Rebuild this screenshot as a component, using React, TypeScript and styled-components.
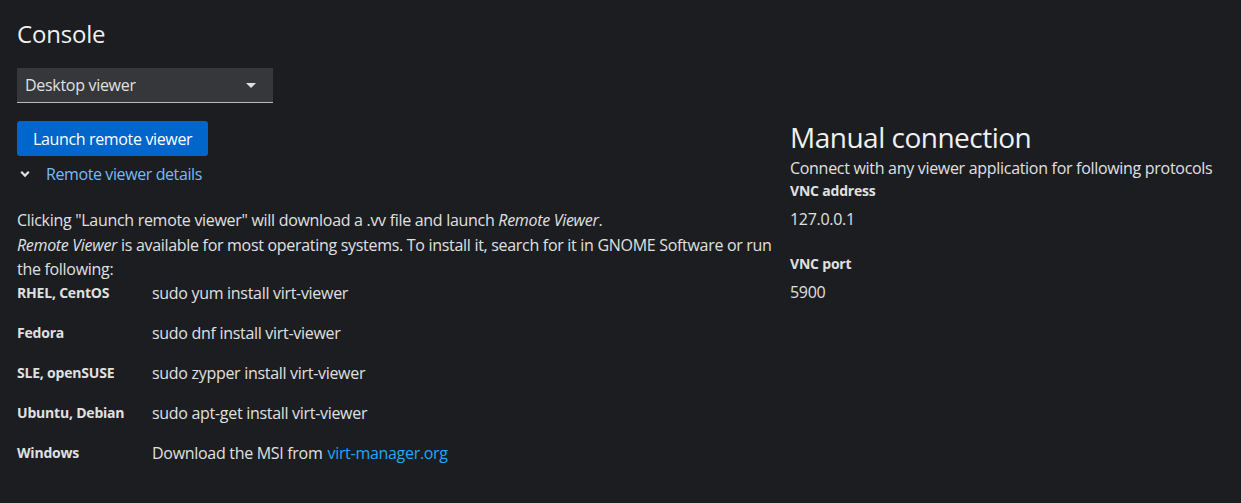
import React from "react";
import styled, { createGlobalStyle } from "styled-components";

const Global = createGlobalStyle`
  html, body { margin: 0; padding: 0; background: #1b1d21; }
  body { font-family: "Open Sans", "Noto Sans", sans-serif; color: #e0e0e0; letter-spacing: -0.3px; }
  * { box-sizing: border-box; }
`;

const Page = styled.div`
  min-height: 503px;
  background: #1b1d21;
  padding: 18px 8px 18px 17px;
`;

const Title = styled.h1`
  margin: 0;
  font-size: 24px;
  font-weight: 400;
  line-height: 32px;
  color: #f0f0f0;
  letter-spacing: -0.2px;
`;

const Columns = styled.div`
  display: grid;
  grid-template-columns: 757px 1fr;
  column-gap: 16px;
  margin-top: 18px;
`;

const Left = styled.div`
  display: flex;
  flex-direction: column;
  align-items: flex-start;
`;

const Select = styled.div`
  width: 256px;
  height: 35px;
  background: #36373a;
  border-bottom: 1px solid #b8bbbe;
  display: flex;
  align-items: center;
  justify-content: space-between;
  padding: 0 17px 0 8px;
  font-size: 16px;
  color: #e0e0e0;
`;

const Caret = styled.span`
  width: 0;
  height: 0;
  border-left: 5px solid transparent;
  border-right: 5px solid transparent;
  border-top: 5px solid #e0e0e0;
`;

const PrimaryButton = styled.button`
  margin-top: 18px;
  height: 35px;
  padding: 0 16px;
  border: none;
  border-radius: 3px;
  background: #0066cc;
  color: #ffffff;
  font-family: inherit;
  font-size: 16px;
  letter-spacing: -0.35px;
`;

const Toggle = styled.div`
  margin-top: 7px;
  display: flex;
  align-items: center;
  gap: 16px;
  padding-left: 3px;
  font-size: 16px;
  color: #73bcf7;
  height: 22px;
  letter-spacing: -0.4px;
`;

const Paragraph = styled.p`
  margin: 23px 0 0;
  font-size: 16px;
  line-height: 24.5px;
  color: #e0e0e0;
`;

const OsTable = styled.div`
  display: grid;
  grid-template-columns: 135px 1fr;
  grid-auto-rows: 40px;
  margin-top: -1px;
`;

const OsName = styled.div`
  font-size: 14px;
  font-weight: 700;
  display: flex;
  align-items: center;
  height: 24px;
  color: #e0e0e0;
  letter-spacing: -0.2px;
`;

const OsCmd = styled.div`
  font-size: 16px;
  display: flex;
  align-items: center;
  height: 24px;
  color: #e0e0e0;
`;

const Link = styled.a`
  color: #1fa7f8;
  text-decoration: none;
  margin-left: 5px;
`;

const Right = styled.div`
  padding-top: 51px;
`;

const SubTitle = styled.h2`
  margin: 0;
  font-size: 28px;
  font-weight: 400;
  line-height: 36px;
  color: #f0f0f0;
  letter-spacing: -0.5px;
`;

const Desc = styled.div`
  font-size: 16px;
  line-height: 24px;
  margin-top: 1px;
  white-space: nowrap;
`;

const Term = styled.div<{ $first?: boolean }>`
  font-size: 14px;
  font-weight: 700;
  line-height: 20px;
  margin-top: ${(p) => (p.$first ? "1px" : "23px")};
  letter-spacing: -0.2px;
`;

const Value = styled.div`
  font-size: 16px;
  line-height: 24px;
  margin-top: 6px;
`;

const rows: [string, React.ReactNode][] = [
  ["RHEL, CentOS", "sudo yum install virt-viewer"],
  ["Fedora", "sudo dnf install virt-viewer"],
  ["SLE, openSUSE", "sudo zypper install virt-viewer"],
  ["Ubuntu, Debian", "sudo apt-get install virt-viewer"],
  [
    "Windows",
    <>
      Download the MSI from<Link href="#">virt-manager.org</Link>
    </>,
  ],
];

export default function App() {
  return (
    <Page>
      <Global />
      <Title>Console</Title>
      <Columns>
        <Left>
          <Select>
            <span>Desktop viewer</span>
            <Caret />
          </Select>
          <PrimaryButton>Launch remote viewer</PrimaryButton>
          <Toggle>
            <svg width="10" height="8" viewBox="0 0 10 8">
              <path d="M1.2 1.8 L5 5.6 L8.8 1.8" stroke="#e0e0e0" strokeWidth="2.2" fill="none" />
            </svg>
            <span>Remote viewer details</span>
          </Toggle>
          <Paragraph>
            Clicking "Launch remote viewer" will download a .vv file and launch <i>Remote Viewer</i>.
            <br />
            <i>Remote Viewer</i> is available for most operating systems. To install it, search for it in GNOME
            Software or run the following:
          </Paragraph>
          <OsTable>
            {rows.map(([name, cmd]) => (
              <React.Fragment key={name}>
                <OsName>{name}</OsName>
                <OsCmd>{cmd}</OsCmd>
              </React.Fragment>
            ))}
          </OsTable>
        </Left>
        <Right>
          <SubTitle>Manual connection</SubTitle>
          <Desc>Connect with any viewer application for following protocols</Desc>
          <Term $first>VNC address</Term>
          <Value>127.0.0.1</Value>
          <Term>VNC port</Term>
          <Value>5900</Value>
        </Right>
      </Columns>
    </Page>
  );
}
